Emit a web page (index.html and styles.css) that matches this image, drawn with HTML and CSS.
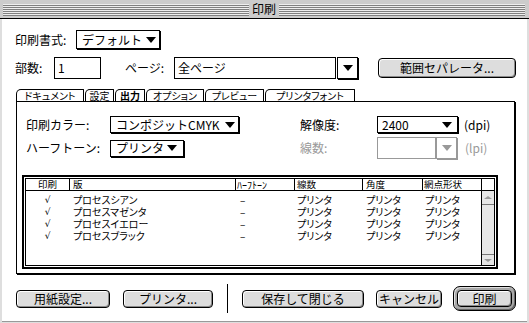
FILE: index.html
```html
<!DOCTYPE html>
<html lang="ja">
<head>
<meta charset="utf-8">
<title>印刷</title>
<link rel="stylesheet" href="styles.css">
</head>
<body>
<div class="window">
  <div class="titlebar">
    <div class="stripes"></div>
    <div class="title">印刷</div>
    <div class="stripes"></div>
  </div>
  <div class="content">
    <div class="row row-format">
      <span class="label label-format">印刷書式:</span>
      <div class="popup popup-format"><span>デフォルト</span><span class="tri"></span></div>
    </div>
    <div class="row row-copies">
      <span class="label label-copies">部数:</span>
      <div class="field field-copies">1</div>
      <span class="label label-pages">ページ:</span>
      <div class="field field-pages">全ページ</div>
      <div class="dropbtn"><span class="tri"></span></div>
      <div class="btn btn-range">範囲セパレータ...</div>
    </div>
    <div class="tabs">
      <div class="tab tab-doc">ドキュメント</div>
      <div class="tab tab-set">設定</div>
      <div class="tab tab-out active">出力</div>
      <div class="tab tab-opt">オプション</div>
      <div class="tab tab-prev">プレビュー</div>
      <div class="tab tab-font">プリンタフォント</div>
    </div>
    <div class="panel">
      <div class="settings">
        <span class="label">印刷カラー:</span>
        <div class="cell"><div class="popup popup-color"><span>コンポジットCMYK</span><span class="tri"></span></div></div>
        <span class="label">解像度:</span>
        <div class="cell"><div class="popup popup-res"><span>2400</span><span class="tri"></span></div><span class="unit unit-dpi">(dpi)</span></div>
        <span class="label">ハーフトーン:</span>
        <div class="cell"><div class="popup popup-ht"><span>プリンタ</span><span class="tri"></span></div></div>
        <span class="label disabled">線数:</span>
        <div class="cell"><div class="field field-lpi"></div><div class="dropbtn dropbtn-off"><span class="tri"></span></div><span class="unit unit-lpi disabled">(lpi)</span></div>
      </div>
      <div class="list">
        <div class="list-inner">
          <div class="table">
            <div class="thead">
              <div class="th c1">印刷</div>
              <div class="th c2">版</div>
              <div class="th c3">ﾊｰﾌﾄｰﾝ</div>
              <div class="th c4">線数</div>
              <div class="th c5">角度</div>
              <div class="th c6">網点形状</div>
            </div>
            <div class="tbody">
              <div class="tr"><div class="td c1">√</div><div class="td c2">プロセスシアン</div><div class="td c3">–</div><div class="td c4">プリンタ</div><div class="td c5">プリンタ</div><div class="td c6">プリンタ</div></div>
              <div class="tr"><div class="td c1">√</div><div class="td c2">プロセスマゼンタ</div><div class="td c3">–</div><div class="td c4">プリンタ</div><div class="td c5">プリンタ</div><div class="td c6">プリンタ</div></div>
              <div class="tr"><div class="td c1">√</div><div class="td c2">プロセスイエロー</div><div class="td c3">–</div><div class="td c4">プリンタ</div><div class="td c5">プリンタ</div><div class="td c6">プリンタ</div></div>
              <div class="tr"><div class="td c1">√</div><div class="td c2">プロセスブラック</div><div class="td c3">–</div><div class="td c4">プリンタ</div><div class="td c5">プリンタ</div><div class="td c6">プリンタ</div></div>
            </div>
          </div>
          <div class="scroll">
            <div class="scroll-head"></div>
            <div class="scroll-up"><span class="arrow-up"></span></div>
            <div class="scroll-track"></div>
            <div class="scroll-down"><span class="arrow-down"></span></div>
          </div>
        </div>
      </div>
    </div>
    <div class="footer">
      <div class="btn btn-paper">用紙設定...</div>
      <div class="btn btn-printer">プリンタ...</div>
      <div class="sep"></div>
      <div class="btn btn-save">保存して閉じる</div>
      <div class="btn btn-cancel">キャンセル</div>
      <div class="default-ring"><div class="btn btn-print">印刷</div></div>
    </div>
  </div>
</div>
</body>
</html>
```

FILE: styles.css
```css
* { box-sizing: border-box; }
html, body { margin: 0; padding: 0; }
body {
  width: 529px;
  height: 323px;
  overflow: hidden;
  background: #fff;
  font-family: "Noto Sans CJK JP", "Liberation Sans", sans-serif;
  font-size: 12px;
  color: #000;
}
.window {
  width: 529px;
  height: 323px;
  background: #dedede;
  display: flex;
  flex-direction: column;
}
.titlebar {
  height: 19px;
  flex: none;
  display: flex;
  align-items: flex-start;
  background: #cccccc;
  border-bottom: 1px solid #000;
  padding: 0 4px 0 3px;
}
.stripes {
  flex: 1;
  height: 12px;
  margin-top: 4px;
  background: repeating-linear-gradient(to bottom, #eeeeee 0 1px, #808080 1px 2px);
}
.title {
  padding: 0 3px;
  height: 18px;
  line-height: 18px;
  font-size: 12px;
}
.content {
  flex: 1;
  background: #fff;
  margin: 0 2px 1px 2px;
  border-bottom: 1px solid #999;
  padding: 11px 0 0 13px;
}
.row { display: flex; align-items: center; }
.label { line-height: 1; white-space: nowrap; }
.disabled { color: #999; }
.row-format { height: 19px; }
.label-format { width: 61px; }
.popup {
  height: 19px;
  border: 1px solid #000;
  box-shadow: 1px 1px 0 #000;
  background: #fff;
  display: flex;
  align-items: center;
  padding-left: 5px;
  line-height: 1;
  white-space: nowrap;
}
.tri {
  width: 0;
  height: 0;
  border-left: 5px solid transparent;
  border-right: 5px solid transparent;
  border-top: 6px solid #000;
  margin-left: auto;
  margin-right: 3px;
}
.popup-format { width: 84px; }
.row-copies { height: 22px; margin-top: 8px; }
.label-copies { width: 39px; }
.field {
  height: 22px;
  border: 1px solid #000;
  background: #fff;
  display: flex;
  align-items: center;
  padding-left: 3px;
  line-height: 1;
}
.field-copies { width: 47px; }
.label-pages { margin-left: 24px; width: 49px; }
.field-pages { width: 162px; }
.dropbtn {
  width: 21px;
  height: 22px;
  margin-left: 1px;
  border: 1px solid #000;
  box-shadow: 1px 1px 0 #000;
  background: #fff;
  display: flex;
  align-items: center;
  justify-content: center;
}
.dropbtn .tri { margin: 0; }
.btn {
  height: 18px;
  border: 1px solid #000;
  border-radius: 4px;
  background: #dddddd;
  box-shadow: inset 1px 1px 0 #fff, inset -1px -1px 0 #8a8a8a;
  display: flex;
  align-items: center;
  justify-content: center;
  line-height: 1;
  white-space: nowrap;
}
.btn-range { margin-left: 20px; width: 138px; height: 20px; }

.tabs { display: flex; gap: 1px; margin: 10px 0 0 1px; height: 12px; }
.tab {
  height: 12px;
  border: 1px solid #000;
  border-bottom: none;
  border-top-left-radius: 5px;
  border-top-right-radius: 1px;
  font-size: 10px;
  line-height: 11px;
  text-align: center;
  white-space: nowrap;
  font-feature-settings: "palt";
}
.tab.active { font-weight: bold; }
.tab-doc { width: 68px; }
.tab-set { width: 29px; }
.tab-out { width: 30px; }
.tab-opt { width: 58px; }
.tab-prev { width: 59px; }
.tab-font { width: 90px; }

.panel {
  margin-left: 1px;
  width: 499px;
  height: 173px;
  border: 1px solid #000;
  box-shadow: 1px 1px 0 #000;
  padding: 14px 0 0 5px;
}
.settings {
  display: grid;
  grid-template-columns: 84px 190px 77px auto;
  grid-template-rows: 17px 22px;
  row-gap: 4px;
  align-items: center;
  margin-left: 4px;
}
.cell { display: flex; align-items: center; }
.settings .popup { height: 17px; }
.popup-color { width: 129px; }
.popup-res { width: 81px; padding-left: 4px; }
.popup-res .tri { margin-right: 5px; }
.popup-ht { width: 74px; }
.popup-ht .tri { margin-right: 6px; }
.unit { line-height: 1; }
.unit-dpi { margin-left: 6px; }
.field-lpi { width: 59px; border-color: #999; }
.dropbtn-off { border-color: #999; box-shadow: 1px 1px 0 #999; margin-left: 0; }
.dropbtn-off .tri { border-top-color: #999; }
.unit-lpi { margin-left: 8px; }

.list {
  margin-top: 16px;
  width: 476px;
  border: 2px solid #000;
  padding: 1px;
  background: #fff;
}
.list-inner {
  height: 88px;
  border: 1px solid #000;
  display: flex;
}
.table { width: 455px; }
.thead {
  display: grid;
  grid-template-columns: 43px 166px 59px 68px 60px 59px;
  height: 12px;
  border-bottom: 1px solid #000;
}
.th {
  font-size: 9.5px;
  line-height: 11px;
  height: 11px;
  white-space: nowrap;
  font-feature-settings: "palt";
}
.th + .th { border-left: 1px solid #000; }
.th.c1 { text-align: center; }
.th.c2 { padding-left: 3px; }
.th.c3 { padding-left: 1px; font-size: 10px; }
.th.c4 { padding-left: 2px; }
.th.c5 { padding-left: 3px; }
.th.c6 { padding-left: 1px; }
.tbody { padding-top: 3px; }
.tr {
  display: grid;
  grid-template-columns: 43px 166px 59px 68px 60px 59px;
  height: 12px;
}
.td {
  font-size: 10px;
  line-height: 12px;
  height: 12px;
  white-space: nowrap;
  font-feature-settings: "palt";
}
.td.c1 {
  text-align: center;
  font-family: "DejaVu Sans", sans-serif;
  font-size: 9px;
}
.td.c2 { padding-left: 4px; }
.td.c3 { padding-left: 5px; }
.td.c4 { padding-left: 3px; }
.td.c5 { padding-left: 4px; }
.td.c6 { padding-left: 3px; }

.scroll {
  width: 13px;
  border-left: 1px solid #000;
  display: flex;
  flex-direction: column;
}
.scroll-head { height: 12px; flex: none; border-bottom: 1px solid #000; background: #fff; }
.scroll-up {
  height: 14px;
  flex: none;
  border-bottom: 1px solid #777;
  background: #e6e6e6;
  display: flex;
  align-items: center;
  justify-content: center;
}
.scroll-track { flex: 1; background: #e6e6e6; }
.scroll-down {
  height: 11px;
  flex: none;
  border-top: 1px solid #777;
  background: #e6e6e6;
  display: flex;
  align-items: center;
  justify-content: center;
}
.arrow-up {
  width: 0; height: 0;
  border-left: 4px solid transparent;
  border-right: 4px solid transparent;
  border-bottom: 3px solid #9a9a9a;
}
.arrow-down {
  width: 0; height: 0;
  border-left: 4px solid transparent;
  border-right: 4px solid transparent;
  border-top: 3px solid #9a9a9a;
}

.footer {
  display: flex;
  align-items: center;
  height: 29px;
  margin-top: 10px;
  padding-left: 1px;
}
.btn-paper { width: 94px; }
.btn-printer { width: 90px; margin-left: 13px; }
.sep { width: 1px; height: 29px; background: #000; margin-left: 14px; }
.btn-save { width: 122px; margin-left: 14px; }
.btn-cancel { width: 66px; margin-left: 12px; }
.default-ring {
  margin-left: 11px;
  width: 63px;
  height: 25px;
  border: 1px solid #000;
  border-radius: 7px;
  padding: 3px;
  background: #a8a8a8;
  box-shadow: inset 1px 1px 0 #e0e0e0, inset -1px -1px 0 #666;
}
.btn-print { width: 100%; height: 17px; }
```
